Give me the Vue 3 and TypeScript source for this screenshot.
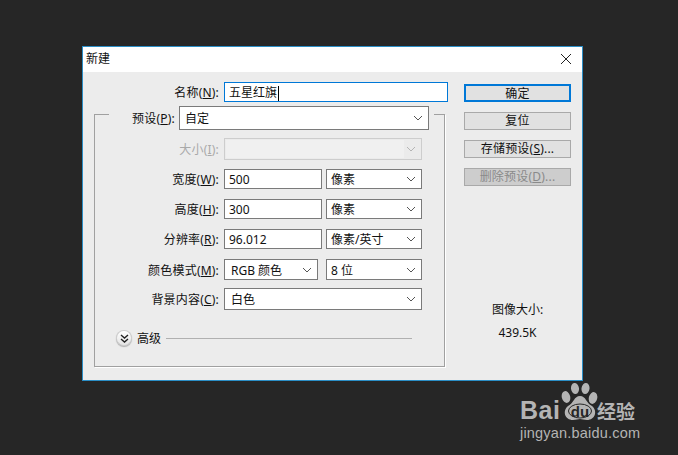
<script setup lang="ts">
interface SizeRow {
  label: string
  key: string
  value: string
  unit: string
}
const sizeRows: SizeRow[] = [
  { label: '宽度', key: 'W', value: '500', unit: '像素' },
  { label: '高度', key: 'H', value: '300', unit: '像素' },
  { label: '分辨率', key: 'R', value: '96.012', unit: '像素/英寸' },
]
</script>

<template>
  <div class="screen">
    <section class="dialog">
      <header class="title">
        <span class="title-text">新建</span>
        <svg class="close" width="12" height="12" viewBox="0 0 12 12"><path d="M1 1 L11 11 M11 1 L1 11" stroke="#222" stroke-width="1" fill="none" /></svg>
      </header>
      <div class="body">
        <div class="group"></div>
        <form class="form">
          <div class="row r-name">
            <label class="lab">名称(<u>N</u>):</label>
            <div class="field focus name"><span class="caret">五星红旗</span></div>
          </div>
          <div class="row r-preset">
            <label class="lab short">预设(<u>P</u>):</label>
            <div class="field sel preset"><span class="pad">自定</span>
              <svg class="chev" width="10" height="6" viewBox="0 0 10 6"><path d="M1 1 L5 5 L9 1" fill="none" stroke="#555" /></svg>
            </div>
          </div>
          <div class="row r-size">
            <label class="lab off">大小(<u>I</u>):</label>
            <div class="field disabled">
              <div class="dis-fill"></div>
              <svg class="chev" width="10" height="6" viewBox="0 0 10 6"><path d="M1 1 L5 5 L9 1" fill="none" stroke="#b4b4b4" /></svg>
            </div>
          </div>
          <div v-for="r in sizeRows" :key="r.key" class="row r-num">
            <label class="lab">{{ r.label }}(<u>{{ r.key }}</u>):</label>
            <div class="field num">{{ r.value }}</div>
            <div class="field sel unit"><span>{{ r.unit }}</span>
              <svg class="chev" width="10" height="6" viewBox="0 0 10 6"><path d="M1 1 L5 5 L9 1" fill="none" stroke="#555" /></svg>
            </div>
          </div>
          <div class="row r-mode">
            <label class="lab">颜色模式(<u>M</u>):</label>
            <div class="field sel mode"><span class="pad">RGB 颜色</span>
              <svg class="chev" width="10" height="6" viewBox="0 0 10 6"><path d="M1 1 L5 5 L9 1" fill="none" stroke="#555" /></svg>
            </div>
            <div class="field sel bits"><span>8 位</span>
              <svg class="chev" width="10" height="6" viewBox="0 0 10 6"><path d="M1 1 L5 5 L9 1" fill="none" stroke="#555" /></svg>
            </div>
          </div>
          <div class="row r-bg">
            <label class="lab">背景内容(<u>C</u>):</label>
            <div class="field sel bg"><span class="pad">白色</span>
              <svg class="chev" width="10" height="6" viewBox="0 0 10 6"><path d="M1 1 L5 5 L9 1" fill="none" stroke="#555" /></svg>
            </div>
          </div>
          <div class="adv">
            <span class="round">
              <svg width="9" height="9" viewBox="0 0 9 9"><path d="M1 1 L4.5 4 L8 1 M1 5 L4.5 8 L8 5" fill="none" stroke="#222" stroke-width="1.4" /></svg>
            </span>
            <span class="adv-text">高级</span>
            <span class="adv-line"></span>
          </div>
        </form>
        <aside class="side">
          <button type="button" class="btn ok">确定</button>
          <button type="button" class="btn">复位</button>
          <button type="button" class="btn">存储预设(<u>S</u>)...</button>
          <button type="button" class="btn dim">删除预设(<u>D</u>)...</button>
          <div class="info">
            <div>图像大小:</div>
            <div class="kb">439.5K</div>
          </div>
        </aside>
      </div>
    </section>

    <div class="mark">
      <div class="logo">
        <span class="bai">Bai</span>
        <span class="paw">
          <svg width="38" height="40" viewBox="0 0 38 40">
            <ellipse cx="5" cy="14" rx="4.2" ry="6" transform="rotate(-14 5 14)" fill="#b4b4b4" />
            <ellipse cx="14" cy="5.5" rx="4" ry="5.5" transform="rotate(-8 14 5.5)" fill="#b4b4b4" />
            <ellipse cx="24.5" cy="5.5" rx="4" ry="5.5" transform="rotate(8 24.5 5.5)" fill="#b4b4b4" />
            <ellipse cx="32" cy="15" rx="4.2" ry="6" transform="rotate(14 32 15)" fill="#b4b4b4" />
            <path d="M19 13 C25 13 25 20 31 23 C37 28 34 37 26 37 C23 37 21 36 19 36 C17 36 15 37 12 37 C4 37 1 28 7 23 C13 20 13 13 19 13 Z" fill="#b4b4b4" />
            <ellipse cx="19" cy="28" rx="11.5" ry="7" fill="none" stroke="#262626" stroke-width="1" />
          </svg>
          <span class="du">du</span>
        </span>
        <span class="jy">经验</span>
      </div>
      <div class="url">jingyan.baidu.com</div>
    </div>
  </div>
</template>

<style>
html, body { margin: 0; background: #262626; }
</style>

<style scoped>
.screen {
  position: relative;
  width: 678px;
  height: 455px;
  overflow: hidden;
  background: #262626;
  padding: 46px 0 0 82px;
  box-sizing: border-box;
  font: 12px/16px "Noto Sans", "Noto Sans CJK SC", sans-serif;
  color: #111;
}
.dialog {
  width: 501px;
  height: 335px;
  box-sizing: border-box;
  border: 1px solid #2b8ec6;
  background: #ececec;
  display: flex;
  flex-direction: column;
}
.title {
  height: 25px;
  flex: none;
  background: #fff;
  display: flex;
  align-items: center;
  justify-content: space-between;
  padding: 0 5px 0 3px;
}
.title-text { margin-top: -1px; }
.close { margin-right: 5px; margin-top: -2px; }
.body {
  position: relative;
  flex: 1;
  display: flex;
}
.group {
  position: absolute;
  left: 11px;
  top: 42px;
  width: 351px;
  height: 253px;
  box-sizing: border-box;
  border: 1px solid #a0a0a0;
  border-top: 0;
  box-shadow: 1px 1px 0 #fff;
}
.group::before, .group::after {
  content: "";
  position: absolute;
  top: 0;
  height: 1px;
  background: #a0a0a0;
}
.group::before { left: 0; width: 14px; }
.group::after { right: 0; width: 10px; }
.form {
  position: relative;
  width: 365px;
  flex: none;
  padding-top: 10px;
  box-sizing: border-box;
}
.row { display: flex; align-items: center; gap: 4px; }
.lab {
  width: 136px;
  margin-right: 1px;
  padding-top: 2px;
  text-align: right;
  white-space: nowrap;
  letter-spacing: 0.2px;
  flex: none;
}
.lab.short { width: 92px; margin-right: 0; }
.lab.off { color: #a9a9a9; }
.field {
  position: relative;
  box-sizing: border-box;
  height: 100%;
  border: 1px solid #7a7a7a;
  background: #fff;
  display: flex;
  align-items: center;
  padding: 2px 0 0 4px;
  flex: none;
}
.focus { border-color: #0078d7; }
.chev { position: absolute; right: 5px; top: 50%; margin-top: -3px; }
.pad { padding-left: 2px; }
.r-name { height: 20px; }
.name { width: 224px; }
.caret { border-right: 1px solid #000; height: 15px; display: flex; align-items: center; padding-right: 1px; }
.r-preset { height: 24px; margin-top: 4px; }
.preset { width: 250px; padding-left: 3px; }
.r-size { height: 22px; margin-top: 8px; }
.disabled { width: 198px; border-color: #cdcdcd; background: #ebebeb; padding: 1px; }
.dis-fill { width: 178px; height: 100%; background: #f0f0f0; }
.r-num { height: 20px; margin-top: 10px; }
.r-size + .r-num { margin-top: 9px; }
.num { width: 98px; }
.unit { width: 96px; }
.r-mode { height: 21px; margin-top: 10px; }
.mode { width: 94px; }
.bits { width: 96px; margin-left: 4px; }
.r-bg { height: 22px; margin-top: 8px; }
.bg { width: 198px; }
.adv {
  display: flex;
  align-items: center;
  margin: 18px 0 0 34px;
  height: 20px;
}
.round {
  width: 14px;
  height: 14px;
  border-radius: 50%;
  background: linear-gradient(#fff, #e4e4e4);
  box-shadow: 0 0 0 1px #cfcfcf, 0 1px 1px 1px #b0b0b0;
  display: flex;
  align-items: center;
  justify-content: center;
  flex: none;
}
.adv-text { margin-left: 6px; padding-top: 1px; white-space: nowrap; }
.adv-line { width: 246px; height: 1px; background: #b0b0b0; margin-left: 5px; }
.side {
  flex: none;
  width: 107px;
  margin-left: 16px;
  padding-top: 12px;
  display: flex;
  flex-direction: column;
  gap: 10px;
}
.btn {
  height: 18px;
  box-sizing: border-box;
  border: 1px solid #a9a9a9;
  background: #e1e1e1;
  padding: 0 0 1px;
  font: inherit;
  letter-spacing: 0.2px;
  color: #111;
  white-space: nowrap;
}
.btn.ok { border: 2px solid #0078d7; padding: 0 0 2px; }
.btn.dim { background: #cdcdcd; color: #8a8a8a; }
.info {
  text-align: center;
  margin-top: 106px;
}
.kb { margin-top: 7px; }
.mark {
  position: absolute;
  left: 520px;
  top: 383px;
  color: #b4b4b4;
}
.logo { display: flex; align-items: flex-end; height: 40px; }
.bai {
  font: bold 25px/25px "Liberation Sans", sans-serif;
  width: 42px;
  letter-spacing: 0.5px;
}
.paw { position: relative; width: 38px; height: 40px; margin-left: -1px; }
.du {
  position: absolute;
  left: 7px;
  top: 21px;
  width: 24px;
  text-align: center;
  font: bold 15px/15px "Liberation Sans", sans-serif;
  color: #262626;
}
.jy {
  font: bold 19px/24px "Noto Sans CJK SC", sans-serif;
  margin-left: -2px;
  white-space: nowrap;
}
.url {
  font: 14.5px/16px "Liberation Sans", sans-serif;
  letter-spacing: 0.2px;
  margin-top: 2px;
  white-space: nowrap;
}
</style>
